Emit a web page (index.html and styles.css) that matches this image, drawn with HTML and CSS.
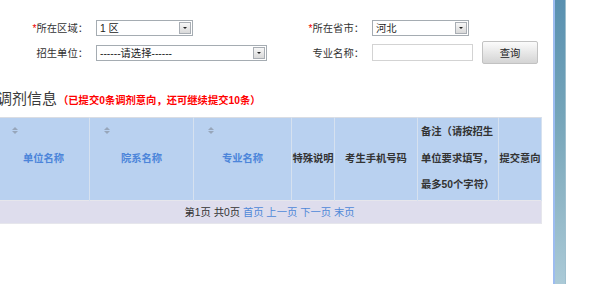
FILE: index.html
```html
<!DOCTYPE html>
<html lang="zh-CN">
<head>
    <meta charset="UTF-8">
    <meta name="viewport" content="width=device-width, initial-scale=1.0">
    <title>调剂信息</title>
    <link rel="stylesheet" href="styles.css">
</head>
<body>
<div class="page">
    <div class="main">
        <div class="search">
            <label class="lbl"><span class="req">*</span>所在区域：</label>
            <div class="cell"><div class="sel sel-s"><span>1 区</span><i class="arrow"></i></div></div>
            <label class="lbl"><span class="req">*</span>所在省市：</label>
            <div class="cell"><div class="sel sel-s"><span>河北</span><i class="arrow"></i></div></div>
            <div></div>

            <label class="lbl">招生单位：</label>
            <div class="cell"><div class="sel sel-l"><span>------请选择------</span><i class="arrow"></i></div></div>
            <label class="lbl">专业名称：</label>
            <div class="cell"><input type="text" class="txt"></div>
            <div class="cell"><button class="btn">查询</button></div>
        </div>

        <h2 class="title">调剂信息<span class="tip">（已提交0条调剂意向，还可继续提交10条）</span></h2>

        <table class="grid">
            <colgroup>
                <col style="width:92px"><col style="width:104px"><col style="width:98px">
                <col style="width:43px"><col style="width:83px"><col style="width:81px"><col style="width:43px">
            </colgroup>
            <thead>
                <tr>
                    <th class="sort"><i class="si"></i>单位名称</th>
                    <th class="sort"><i class="si"></i>院系名称</th>
                    <th class="sort"><i class="si"></i>专业名称</th>
                    <th>特殊说明</th>
                    <th>考生手机号码</th>
                    <th class="note">备注（请按招生<br>单位要求填写，<br>最多50个字符）</th>
                    <th>提交意向</th>
                </tr>
            </thead>
            <tbody>
                <tr>
                    <td colspan="7" class="pager">第1页&nbsp;共0页&nbsp;<a href="#">首页</a>&nbsp;<a href="#">上一页</a>&nbsp;<a href="#">下一页</a>&nbsp;<a href="#">末页</a></td>
                </tr>
            </tbody>
        </table>
    </div>
    <div class="bar"></div>
</div>
</body>
</html>
```

FILE: styles.css
```css
body {
    margin: 0;
    font-family: "Liberation Sans", "Noto Sans CJK SC", sans-serif;
    font-size: 10.3px;
    color: #333;
    background: #fff;
}

.page {
    display: flex;
    height: 284px;
    overflow: hidden;
}
.main {
    width: 553px;
    flex: none;
}
.bar {
    width: 10px;
    flex: none;
    border-left: 2px solid #9dbcf0;
    border-right: 1px solid #9fbfce;
    background: linear-gradient(#5990b0, #74a4b9 40%, #8fb6c6 70%, #abcad7);
}

/* search form */
.search {
    display: grid;
    grid-template-columns: 88px 212px 64px 110px auto;
    grid-auto-rows: 25px;
    align-items: center;
    padding-top: 15px;
}
.lbl {
    text-align: right;
    white-space: nowrap;
}
.req {
    color: #e00;
}
.cell {
    padding-left: 8px;
    display: flex;
    align-items: center;
}
.sel {
    display: flex;
    align-items: center;
    box-sizing: border-box;
    height: 16px;
    padding-left: 3px;
    border: 1px solid #a5acb2;
    background: #fff;
    color: #222;
}
.sel span {
    flex: 1;
    white-space: nowrap;
}
.sel-s {
    width: 97px;
}
.sel-l {
    width: 171px;
}
.arrow {
    position: relative;
    width: 12px;
    height: 12px;
    margin-right: 1px;
    box-sizing: border-box;
    border: 1px solid #a9aeb4;
    background: linear-gradient(#f7f7f7, #d9d9d9);
}
.arrow::after {
    content: "";
    position: absolute;
    left: 3px;
    top: 4px;
    border-left: 2px solid transparent;
    border-right: 2px solid transparent;
    border-top: 2px solid #222;
}
.txt {
    box-sizing: border-box;
    width: 101px;
    height: 17px;
    margin: 0;
    border: 1px solid #d3d3d3;
    background: #fff;
}
.btn {
    width: 56px;
    height: 23px;
    padding: 0;
    border: 1px solid #c2c2c2;
    border-radius: 2px;
    background: linear-gradient(#fbfbfb, #d4d4d4);
    font: inherit;
    color: #222;
}

/* result title */
.title {
    display: flex;
    align-items: baseline;
    height: 20px;
    margin: 24px 0 8px -3px;
    font-size: 15px;
    line-height: 20px;
    font-weight: normal;
    color: #3a3a3a;
    white-space: nowrap;
}
.tip {
    margin-left: 1px;
    font-size: 10.3px;
    font-weight: bold;
    color: #f00;
}

/* result grid */
.grid {
    margin-left: -3px;
    width: 544px;
    table-layout: fixed;
    border-collapse: collapse;
    border-top: 1px solid #dadde3;
}
.grid th {
    position: relative;
    padding: 1px 0;
    height: 79px;
    background: #b9d1f0;
    border-left: 1px solid #d6e1ef;
    border-right: 1px solid #d6e1ef;
    font-weight: bold;
    line-height: 26.5px;
    white-space: nowrap;
    color: #333;
}
.grid th.sort {
    color: #4c85da;
}
.grid th.note {
    text-align: left;
    padding-left: 3px;
}
.si {
    position: absolute;
    left: 14px;
    top: 9px;
    width: 6px;
    height: 7px;
}
.si::before,
.si::after {
    content: "";
    position: absolute;
    left: 0;
    border-left: 3px solid transparent;
    border-right: 3px solid transparent;
}
.si::before {
    top: 0;
    border-bottom: 3px solid #97a6ba;
}
.si::after {
    bottom: 0;
    border-top: 3px solid #97a6ba;
}
.pager {
    height: 22px;
    padding: 0;
    text-align: center;
    background: #dedded;
    border: 1px solid #e6e6ec;
    color: #333;
}
.pager a {
    color: #5088d8;
    text-decoration: none;
}
```
